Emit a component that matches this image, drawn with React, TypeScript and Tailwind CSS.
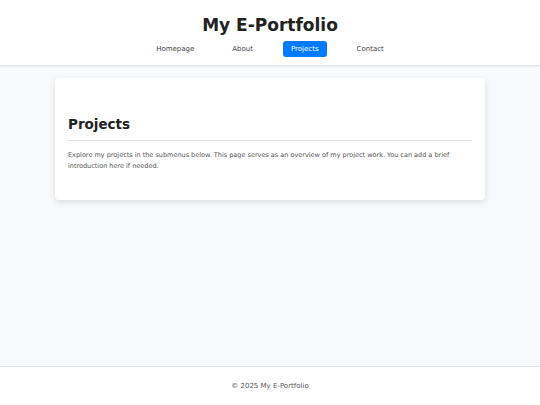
const navItems = ["Homepage", "About", "Projects", "Contact"];

const App = () => {
  return (
    <div className="min-h-screen flex flex-col bg-[#f8f9fa] text-[#333] font-['DejaVu_Sans',sans-serif]">
      <header className="bg-white border-b border-[#e3e3e3] shadow-[0_1px_2px_rgba(0,0,0,0.05)] pt-[13px] pb-[8px]">
        <h1 className="text-center text-[17px] leading-[24px] font-bold text-[#222]">
          My E-Portfolio
        </h1>
        <nav className="mt-[4px] flex justify-center gap-[22px]">
          {navItems.map((item) => (
            <a
              key={item}
              href="#"
              className={`px-[8px] h-[16px] flex items-center rounded-[3px] text-[7px] ${
                item === "Projects" ? "bg-[#007bff] text-white" : "text-[#444]"
              }`}
            >
              {item}
            </a>
          ))}
        </nav>
      </header>

      <main className="flex-1 px-[55px] pt-[12px]">
        <section className="bg-white rounded-[4px] shadow-[0_2px_6px_rgba(0,0,0,0.12)] px-[13px] pt-[36px] pb-[28px]">
          <h2 className="text-[13.5px] leading-[20px] font-bold text-[#222]">Projects</h2>
          <hr className="mt-[6px] border-t border-[#e5e5e5]" />
          <p className="mt-[9px] text-[6.5px] leading-[11px] text-[#555]">
            Explore my projects in the submenus below. This page serves as an overview of my
            project work. You can add a brief introduction here if needed.
          </p>
        </section>
      </main>

      <footer className="bg-white border-t border-[#e3e3e3] h-[39px] flex items-center justify-center text-[7px] text-[#555]">
        © 2025 My E-Portfolio
      </footer>
    </div>
  );
};

export default App;
